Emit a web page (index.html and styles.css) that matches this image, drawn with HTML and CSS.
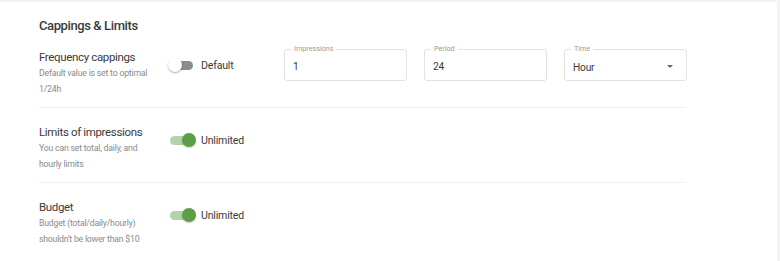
FILE: index.html
```html
<!DOCTYPE html>
<html>
<head>
<meta charset="utf-8">
<link rel="stylesheet" href="styles.css">
</head>
<body>
<div class="card">
  <h2 class="title">Cappings &amp; Limits</h2>
  <div class="rows">
    <div class="row">
      <div class="info">
        <div class="name">Frequency cappings</div>
        <div class="desc">Default value is set to optimal<br>1/24h</div>
      </div>
      <div class="switch-wrap">
        <span class="switch off"><span class="track"></span><span class="thumb"></span></span>
        <span class="switch-label">Default</span>
      </div>
      <div class="fields">
        <div class="field"><span class="flabel">Impressions</span><span class="fvalue">1</span></div>
        <div class="field"><span class="flabel">Period</span><span class="fvalue">24</span></div>
        <div class="field select"><span class="flabel">Time</span><span class="fvalue">Hour</span><span class="arrow"></span></div>
      </div>
    </div>
    <div class="row">
      <div class="info">
        <div class="name">Limits of impressions</div>
        <div class="desc">You can set total, daily, and<br>hourly limits</div>
      </div>
      <div class="switch-wrap">
        <span class="switch on"><span class="track"></span><span class="thumb"></span></span>
        <span class="switch-label">Unlimited</span>
      </div>
    </div>
    <div class="row last">
      <div class="info">
        <div class="name">Budget</div>
        <div class="desc">Budget (total/daily/hourly)<br>shouldn't be lower than $10</div>
      </div>
      <div class="switch-wrap">
        <span class="switch on"><span class="track"></span><span class="thumb"></span></span>
        <span class="switch-label">Unlimited</span>
      </div>
    </div>
  </div>
</div>
</body>
</html>
```

FILE: styles.css
```css
html, body {
  margin: 0;
  padding: 0;
  background: #f4f4f4;
  font-family: Roboto, "Liberation Sans", sans-serif;
  color: #333;
}
.card {
  background: #fff;
  margin: 2px 3px 0 0;
  height: 259px;
  padding: 12px 0 0 39px;
  box-sizing: border-box;
}
.title {
  margin: 0;
  font-size: 13px;
  letter-spacing: -0.4px;
  line-height: 24px;
  font-weight: 500;
  color: #3a3a3a;
}
.rows {
  width: 647px;
}
.row {
  display: flex;
  align-items: flex-start;
  padding: 16px 0 10px;
  border-bottom: 1px solid #f0f0f0;
}
.row:first-child {
  padding-top: 11px;
}
.row.last {
  border-bottom: none;
}
.info {
  width: 129px;
  flex: none;
}
.name {
  font-size: 11.5px;
  letter-spacing: -0.35px;
  line-height: 16px;
  color: #3a3a3a;
}
.desc {
  font-size: 8.7px;
  letter-spacing: -0.2px;
  line-height: 16px;
  color: #8a8a8a;
}
.switch-wrap {
  display: flex;
  align-items: center;
  gap: 5px;
  width: 116px;
  flex: none;
  margin-top: 8px;
  height: 16px;
}
.switch {
  position: relative;
  width: 28px;
  height: 14px;
  flex: none;
}
.track {
  position: absolute;
  left: 2px;
  right: 3px;
  top: 2.5px;
  height: 9px;
  border-radius: 5px;
  background: #8c8c8c;
}
.thumb {
  position: absolute;
  top: 0;
  width: 14px;
  height: 14px;
  border-radius: 50%;
  background: #fff;
  box-shadow: 0 1px 2px rgba(0,0,0,0.35);
}
.switch.off .thumb { left: 0; }
.switch.on .track { background: #b3d4a9; }
.switch.on .thumb { right: 0; background: #5b9e48; box-shadow: 0 1px 2px rgba(0,0,0,0.2); }
.switch-label {
  font-size: 10.6px;
  letter-spacing: -0.2px;
  color: #3a3a3a;
}
.fields {
  display: flex;
  gap: 17px;
}
.field {
  position: relative;
  width: 123px;
  height: 32px;
  box-sizing: border-box;
  border: 1px solid #e2e2e2;
  border-radius: 3px;
  display: flex;
  align-items: center;
  padding: 2px 8px 0;
}
.flabel {
  position: absolute;
  top: -5px;
  left: 6px;
  padding: 0 3px;
  background: #fff;
  font-size: 7.2px;
  line-height: 8px;
  color: #999;
}
.fvalue {
  font-size: 10.2px;
  letter-spacing: -0.2px;
  color: #3a3a3a;
}
.select .fvalue { margin-top: 2px; }
.arrow {
  margin-left: auto;
  margin-right: 5px;
  width: 0;
  height: 0;
  border-left: 3.5px solid transparent;
  border-right: 3.5px solid transparent;
  border-top: 3.5px solid #666;
}
```
